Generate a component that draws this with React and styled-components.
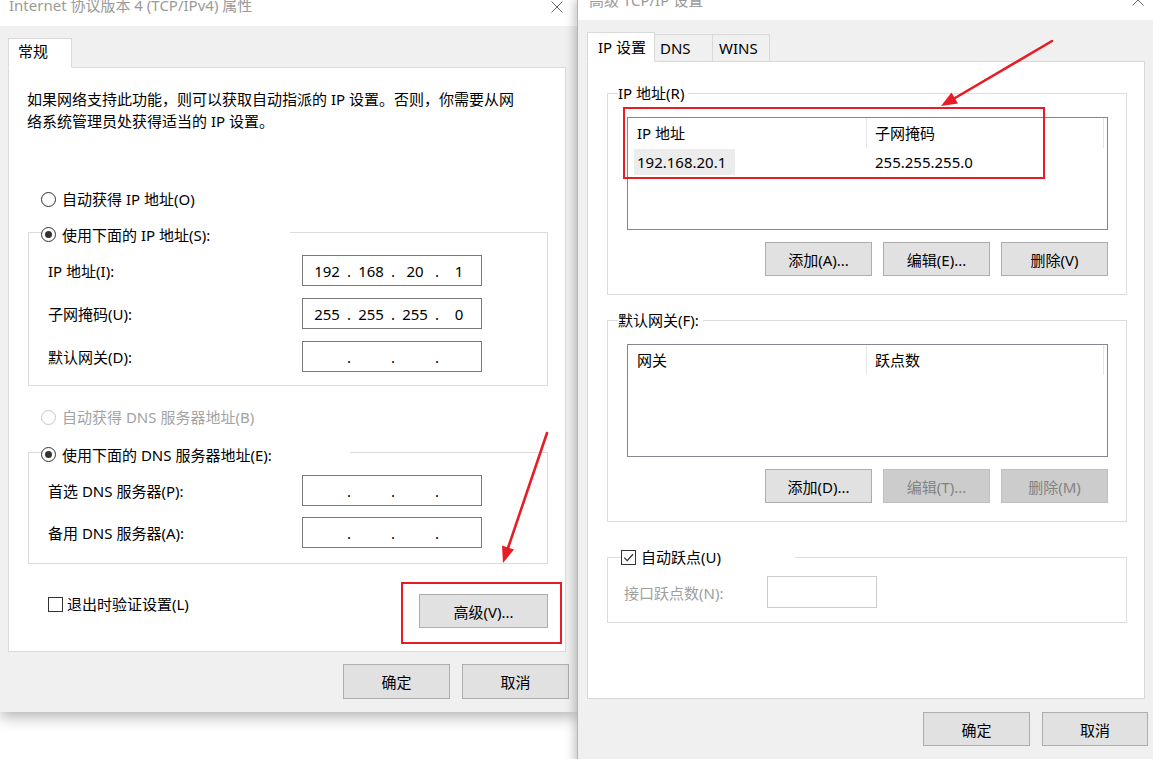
import React from 'react'
import styled, { createGlobalStyle } from 'styled-components'

const GlobalStyle = createGlobalStyle`
  * { box-sizing: border-box; }
  body {
    margin: 0;
    background: #fff;
    font-family: "Noto Sans", "Noto Sans CJK SC", sans-serif;
    font-size: 15px;
    color: #000;
  }
`

const CloseIcon = ({ top }) => (
  <CloseSvg $top={top} width="12" height="12" viewBox="0 0 12 12">
    <path d="M0.5 0.5 L11.5 11.5 M11.5 0.5 L0.5 11.5" stroke="#666" strokeWidth="1" fill="none" />
  </CloseSvg>
)

const IpInput = ({ octets = ['', '', '', ''] }) => (
  <IpBox>
    {octets.map((o, i) => (
      <React.Fragment key={i}>
        {i > 0 && <IpDot>.</IpDot>}
        <Octet>{o}</Octet>
      </React.Fragment>
    ))}
  </IpBox>
)

const RadioChoice = ({ checked, disabled, children }) => (
  <Choice $disabled={disabled} $gap={6}>
    <Radio $checked={checked} $disabled={disabled} />
    {children}
  </Choice>
)

const CheckChoice = ({ checked, gap = 4, children }) => (
  <Choice $gap={gap}>
    <CheckBox>
      {checked && (
        <svg width="13" height="13" viewBox="0 0 13 13">
          <path d="M2.2 6.6 L5.2 9.6 L11 3.2" stroke="#333" strokeWidth="1.3" fill="none" />
        </svg>
      )}
    </CheckBox>
    {children}
  </Choice>
)

const GeneralWindow = () => (
  <Window $width={577} $height={712}>
    <TitleBar $h={26} $pl={9} $pr={14}>
      <Title $offset={-2}>Internet 协议版本 4 (TCP/IPv4) 属性</Title>
      <CloseIcon top={1} />
    </TitleBar>
    <WindowBody $pt={12} $pl={8}>
      <TabStrip>
        <Tab $selected $width={64} $pl={9} $lift={3}>常规</Tab>
      </TabStrip>
      <Panel $height={585} $pt={20} $pl={19} $pr={17}>
        <Intro>
          如果网络支持此功能，则可以获取自动指派的 IP 设置。否则，你需要从网<br />
          络系统管理员处获得适当的 IP 设置。
        </Intro>
        <StandaloneRow $mt={56} $indent={13}>
          <RadioChoice>自动获得 IP 地址(O)</RadioChoice>
        </StandaloneRow>
        <GroupBox $mt={11}>
          <GroupLegend $offset={12} $width={249}>
            <RadioChoice checked>使用下面的 IP 地址(S):</RadioChoice>
          </GroupLegend>
          <GroupBody $pt={12} $pb={13} $pl={19}>
            <FieldGrid $label={254} $gap={12}>
              <span>IP 地址(I):</span>
              <IpInput octets={['192', '168', '20', '1']} />
              <span>子网掩码(U):</span>
              <IpInput octets={['255', '255', '255', '0']} />
              <span>默认网关(D):</span>
              <IpInput />
            </FieldGrid>
          </GroupBody>
        </GroupBox>
        <StandaloneRow $mt={20} $indent={13}>
          <RadioChoice disabled>自动获得 DNS 服务器地址(B)</RadioChoice>
        </StandaloneRow>
        <GroupBox $mt={13}>
          <GroupLegend $offset={12} $width={309}>
            <RadioChoice checked>使用下面的 DNS 服务器地址(E):</RadioChoice>
          </GroupLegend>
          <GroupBody $pt={12} $pb={15} $pl={19}>
            <FieldGrid $label={254} $gap={11}>
              <span>首选 DNS 服务器(P):</span>
              <IpInput />
              <span>备用 DNS 服务器(A):</span>
              <IpInput />
            </FieldGrid>
          </GroupBody>
        </GroupBox>
        <BottomRow>
          <StandaloneRow $indent={20}>
            <CheckChoice>退出时验证设置(L)</CheckChoice>
          </StandaloneRow>
          <Button $width={129} $mt={1}>高级(V)...</Button>
        </BottomRow>
      </Panel>
      <Footer $mt={12}>
        <Button $width={107} $height={35}>确定</Button>
        <Button $width={107} $height={35}>取消</Button>
      </Footer>
    </WindowBody>
  </Window>
)

const AdvancedWindow = () => (
  <Window $width={578} $height={800} $front>
    <TitleBar $h={20} $pl={11} $pr={11}>
      <Title $offset={-7}>高级 TCP/IP 设置</Title>
      <CloseIcon top={-6} />
    </TitleBar>
    <WindowBody $pt={12} $pl={9}>
      <TabStrip>
        <Tab $selected $width={68} $pl={10}>IP 设置</Tab>
        <Tab $width={59} $pl={5}>DNS</Tab>
        <Tab $width={58} $pl={6}>WINS</Tab>
      </TabStrip>
      <Panel $height={638} $pt={20} $pl={19} $pr={17}>
        <GroupBox>
          <GroupLegend $offset={10} $pad={4}>IP 地址(R)</GroupLegend>
          <GroupBody $pt={13} $pb={18} $pl={19}>
            <ListView>
              <ListHeader>
                <HeaderCell>IP 地址</HeaderCell>
                <HeaderCell>子网掩码</HeaderCell>
              </ListHeader>
              <ListRow>
                <Cell $first><Selected>192.168.20.1</Selected></Cell>
                <Cell>255.255.255.0</Cell>
              </ListRow>
            </ListView>
            <ButtonRow>
              <Button $width={107}>添加(A)...</Button>
              <Button $width={107}>编辑(E)...</Button>
              <Button $width={107}>删除(V)</Button>
            </ButtonRow>
          </GroupBody>
        </GroupBox>
        <GroupBox $mt={14}>
          <GroupLegend $offset={10} $pad={4}>默认网关(F):</GroupLegend>
          <GroupBody $pt={13} $pb={18} $pl={19}>
            <ListView>
              <ListHeader>
                <HeaderCell>网关</HeaderCell>
                <HeaderCell>跃点数</HeaderCell>
              </ListHeader>
            </ListView>
            <ButtonRow>
              <Button $width={107}>添加(D)...</Button>
              <Button $width={107} disabled>编辑(T)...</Button>
              <Button $width={107} disabled>删除(M)</Button>
            </ButtonRow>
          </GroupBody>
        </GroupBox>
        <GroupBox $mt={24}>
          <GroupLegend $offset={13} $width={174}>
            <CheckChoice checked gap={5}>自动跃点(U)</CheckChoice>
          </GroupLegend>
          <GroupBody $pt={8} $pb={14} $pl={16}>
            <FieldGrid $label={143} $gap={0}>
              <DimText>接口跃点数(N):</DimText>
              <MetricInput />
            </FieldGrid>
          </GroupBody>
        </GroupBox>
      </Panel>
      <Footer $mt={13}>
        <Button $width={107}>确定</Button>
        <Button $width={106}>取消</Button>
      </Footer>
    </WindowBody>
  </Window>
)

const Annotations = () => (
  <Overlay width="1153" height="759" viewBox="0 0 1153 759">
    <g stroke="#e81c24" strokeWidth="2" fill="none">
      <rect x="624" y="108" width="420" height="70" />
      <rect x="402" y="583" width="159" height="60" />
    </g>
    <g stroke="#e81c24" strokeWidth="2.6" strokeLinecap="round" fill="#e81c24">
      <line x1="547" y1="433" x2="508" y2="548" />
      <line x1="1052" y1="41" x2="955" y2="98" />
    </g>
    <g fill="#e81c24">
      <polygon points="503,563 514,549.5 502,545.5" />
      <polygon points="941,106 958,103.5 951.5,92.5" />
    </g>
  </Overlay>
)

const App = () => (
  <>
    <GlobalStyle />
    <Screen>
      <GeneralWindow />
      <AdvancedWindow />
      <Annotations />
    </Screen>
  </>
)

export default App


// styling
const Screen = styled.div`
  position: relative;
  display: flex;
  align-items: flex-start;
  width: 1153px;
  height: 759px;
  overflow: hidden;
  background: #fff;
`

const Window = styled.div`
  display: flex;
  flex-direction: column;
  flex-shrink: 0;
  width: ${p => p.$width}px;
  height: ${p => p.$height}px;
  background: #f0f0f0;
  position: relative;
  z-index: ${p => (p.$front ? 2 : 1)};
  border-left: ${p => (p.$front ? '1px solid #b4b4b4' : 'none')};
  box-shadow: ${p => (p.$front ? '-3px 0 9px rgba(0,0,0,0.22)' : '0 5px 14px rgba(0,0,0,0.3)')};
`

const TitleBar = styled.div`
  display: flex;
  justify-content: space-between;
  align-items: flex-start;
  height: ${p => p.$h}px;
  padding: 0 ${p => p.$pr}px 0 ${p => p.$pl}px;
  background: #fff;
  overflow: hidden;
  flex-shrink: 0;
`

const Title = styled.div`
  margin-top: ${p => p.$offset}px;
  line-height: 15px;
  color: #9a9a9a;
  white-space: nowrap;
`

const CloseSvg = styled.svg`
  display: block;
  margin-top: ${p => p.$top}px;
`

const WindowBody = styled.div`
  display: flex;
  flex-direction: column;
  padding: ${p => p.$pt}px 0 0 ${p => p.$pl}px;
`

const TabStrip = styled.div`
  display: flex;
  align-items: flex-end;
  height: 30px;
  margin-bottom: -1px;
  position: relative;
  z-index: 1;
`

const Tab = styled.div`
  width: ${p => p.$width}px;
  height: ${p => (p.$selected ? 30 : 28)}px;
  line-height: ${p => (p.$selected ? 28 : 26) - (p.$lift || 0)}px;
  padding-left: ${p => p.$pl}px;
  margin-left: ${p => (p.$selected ? 0 : -1)}px;
  background: ${p => (p.$selected ? '#fff' : '#f0f0f0')};
  border: 1px solid #d9d9d9;
  border-bottom-color: ${p => (p.$selected ? '#fff' : '#d9d9d9')};
  white-space: nowrap;
  &:first-child { margin-left: 0; }
`

const Panel = styled.div`
  display: flex;
  flex-direction: column;
  width: 558px;
  height: ${p => p.$height}px;
  padding: ${p => p.$pt}px ${p => p.$pr}px 0 ${p => p.$pl}px;
  background: #fff;
  border: 1px solid #d9d9d9;
`

const Intro = styled.p`
  margin: 0 0 0 -1px;
  line-height: 22px;
  white-space: nowrap;
`

const StandaloneRow = styled.div`
  display: flex;
  margin-top: ${p => p.$mt || 0}px;
  padding-left: ${p => p.$indent || 0}px;
`

const Choice = styled.label`
  display: inline-flex;
  align-items: center;
  gap: ${p => p.$gap}px;
  line-height: 22px;
  height: 22px;
  white-space: nowrap;
  color: ${p => (p.$disabled ? '#a3a3a3' : '#000')};
`

const Radio = styled.span`
  display: flex;
  align-items: center;
  justify-content: center;
  width: 15px;
  height: 15px;
  border-radius: 50%;
  border: 1px solid ${p => (p.$disabled ? '#c6c6c6' : '#333')};
  background: #fff;

  &::after {
    content: '';
    display: ${p => (p.$checked ? 'block' : 'none')};
    width: 7px;
    height: 7px;
    border-radius: 50%;
    background: #333;
  }
`

const CheckBox = styled.span`
  display: flex;
  align-items: center;
  justify-content: center;
  width: 15px;
  height: 15px;
  border: 1px solid #333;
  background: #fff;
`

const GroupBox = styled.fieldset`
  margin: ${p => p.$mt || 0}px 0 0;
  padding: 0;
  min-width: 0;
  border: 1px solid #dcdcdc;
`

const GroupLegend = styled.legend`
  margin-left: ${p => p.$offset}px;
  padding: 0 ${p => p.$pad || 0}px 0 0;
  width: ${p => (p.$width ? `${p.$width}px` : 'auto')};
  height: 22px;
  line-height: 22px;
  white-space: nowrap;
`

const GroupBody = styled.div`
  padding: ${p => p.$pt}px 0 ${p => p.$pb}px ${p => p.$pl}px;
`

const FieldGrid = styled.div`
  display: grid;
  grid-template-columns: ${p => p.$label}px auto;
  row-gap: ${p => p.$gap}px;
  align-items: center;
  justify-content: start;
`

const IpBox = styled.div`
  display: flex;
  align-items: center;
  width: 180px;
  height: 31px;
  padding-left: 7px;
  border: 1px solid #7a7a7a;
  background: #fff;
`

const Octet = styled.span`
  width: 34px;
  text-align: center;
`

const IpDot = styled.span`
  width: 10px;
  text-align: center;
`

const DimText = styled.span`
  color: #a0a0a0;
`

const MetricInput = styled.div`
  width: 110px;
  height: 32px;
  border: 1px solid #cccccc;
  background: #fff;
`

const ListView = styled.div`
  width: 481px;
  height: 113px;
  border: 1px solid #828790;
  background: #fff;
`

const ListHeader = styled.div`
  display: grid;
  grid-template-columns: 239px 237px;
  height: 30px;
`

const HeaderCell = styled.div`
  padding-left: 8px;
  line-height: 30px;
  border-right: 1px solid #e5e5e5;
  &:first-child { padding-left: 9px; }
`

const ListRow = styled.div`
  display: grid;
  grid-template-columns: 239px 237px;
  height: 26px;
  margin-top: 1px;
  align-items: stretch;
`

const Cell = styled.div`
  display: flex;
  align-items: center;
  padding-left: ${p => (p.$first ? 6 : 8)}px;
`

const Selected = styled.span`
  display: flex;
  align-items: center;
  height: 100%;
  padding: 0 9px 0 3px;
  background: #ececec;
`

const ButtonRow = styled.div`
  display: flex;
  justify-content: flex-end;
  gap: 11px;
  width: 481px;
  margin-top: 12px;
`

const BottomRow = styled.div`
  display: flex;
  justify-content: space-between;
  align-items: flex-start;
  margin-top: 29px;
`

const Footer = styled.div`
  display: flex;
  justify-content: flex-end;
  gap: 12px;
  width: 561px;
  margin-top: ${p => p.$mt}px;
`

const Button = styled.button`
  width: ${p => p.$width}px;
  height: ${p => p.$height || 34}px;
  margin-top: ${p => p.$mt || 0}px;
  padding: 0;
  font: inherit;
  color: #000;
  background: #e1e1e1;
  border: 1px solid #adadad;
  border-radius: 0;

  &:disabled {
    color: #838383;
    background: #cccccc;
    border-color: #bfbfbf;
  }
`

const Overlay = styled.svg`
  position: absolute;
  top: 0;
  left: 0;
  pointer-events: none;
  z-index: 5;
`
